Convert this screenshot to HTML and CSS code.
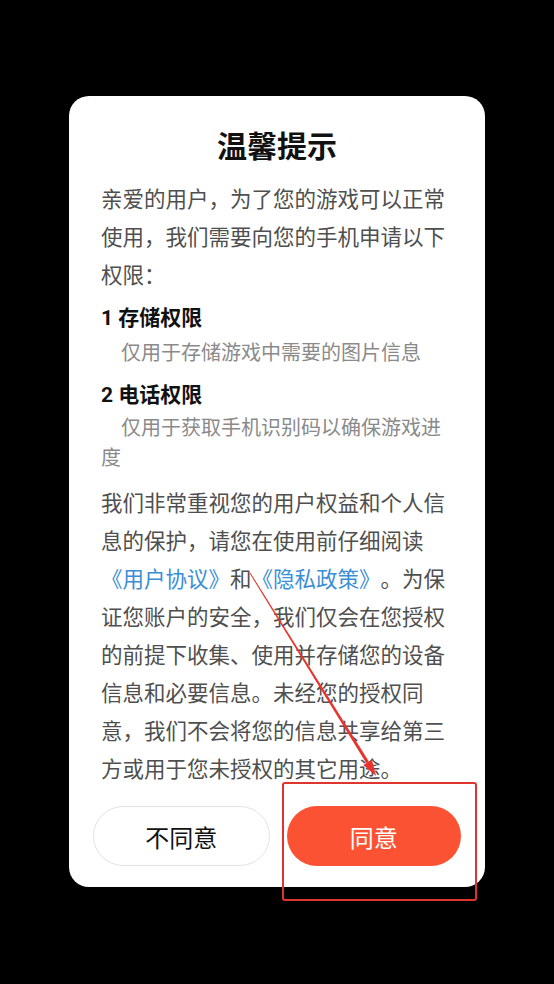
FILE: index.html
```html
<!DOCTYPE html>
<html lang="zh-CN">
<head>
<meta charset="utf-8">
<title>温馨提示</title>
<link rel="stylesheet" href="styles.css">
</head>
<body>
<div class="screen">
  <div class="dialog">
    <h1 class="title">温馨提示</h1>
    <p class="para">亲爱的用户，为了您的游戏可以正常使用，我们需要向您的手机申请以下权限：</p>
    <div class="perm perm-first">
      <div class="perm-name">1 存储权限</div>
      <div class="perm-desc">　仅用于存储游戏中需要的图片信息</div>
    </div>
    <div class="perm perm-second">
      <div class="perm-name">2 电话权限</div>
      <div class="perm-desc">　仅用于获取手机识别码以确保游戏进度</div>
    </div>
    <p class="para para-last">我们非常重视您的用户权益和个人信息的保护，请您在使用前仔细阅读<span class="link">《用户协议》</span>和<span class="link">《隐私政策》</span>。为保证您账户的安全，我们仅会在您授权的前提下收集、使用并存储您的设备信息和必要信息。未经您的授权同意，我们不会将您的信息共享给第三方或用于您未授权的其它用途。</p>
    <div class="actions">
      <button class="btn btn-decline">不同意</button>
      <button class="btn btn-agree">同意</button>
    </div>
  </div>
  <svg class="annotation" width="554" height="984" viewBox="0 0 554 984">
    <polygon fill="#e8342c" points="249.6,573.3 250.4,572.7 368.9,761.6 366.3,763.2"/>
    <polygon fill="#e8342c" points="376,776 363.3,765.0 371.9,759.8"/>
    <rect x="283" y="783" width="193" height="117" rx="2" fill="none" stroke="#e0342e" stroke-width="2"/>
  </svg>
</div>
</body>
</html>
```

FILE: styles.css
```css
html, body {
  margin: 0;
  padding: 0;
  background: #000;
}

body {
  font-family: "Noto Sans CJK SC", "Noto Sans", sans-serif;
  text-spacing-trim: space-all;
}

.screen {
  position: relative;
  width: 554px;
  height: 984px;
  overflow: hidden;
  background: #000;
  padding-top: 96px;
  box-sizing: border-box;
}

.dialog {
  width: 416px;
  margin: 0 auto;
  background: #fff;
  border-radius: 20px;
  padding: 28px 0 21px;
  box-sizing: border-box;
}

.title {
  margin: 0;
  text-align: center;
  font-size: 30px;
  line-height: 40px;
  font-weight: 700;
  color: #111;
}

.para {
  margin: 15px 32px 0;
  font-size: 21.5px;
  line-height: 38px;
  color: #4f4f4f;
  text-spacing-trim: space-all;
}

.para-last {
  margin-top: 11px;
}

.link {
  color: #3a8ed6;
}

.perm {
  margin: 0 32px;
}

.perm-first {
  margin-top: 8px;
}

.perm-second {
  margin-top: 11px;
}

.perm-name {
  font-family: "Roboto", "Noto Sans CJK SC", sans-serif;
  font-size: 21px;
  line-height: 34px;
  font-weight: 700;
  color: #111;
}

.perm-first .perm-desc {
  padding-top: 2px;
}

.perm-desc {
  font-size: 20px;
  line-height: 30px;
  color: #8a8a8a;
}

.actions {
  display: flex;
  gap: 17px;
  margin: 19px 24px 0;
}

.btn {
  flex: 1;
  height: 60px;
  border-radius: 30px;
  font-family: "Noto Sans CJK SC", sans-serif;
  font-size: 24px;
  padding: 0;
  cursor: pointer;
}

.btn-decline {
  background: #fff;
  border: 1px solid #e2e2e2;
  color: #111;
}

.btn-agree {
  background: #fa5232;
  border: none;
  color: #fff;
}

.annotation {
  position: absolute;
  left: 0;
  top: 0;
  pointer-events: none;
}
```
